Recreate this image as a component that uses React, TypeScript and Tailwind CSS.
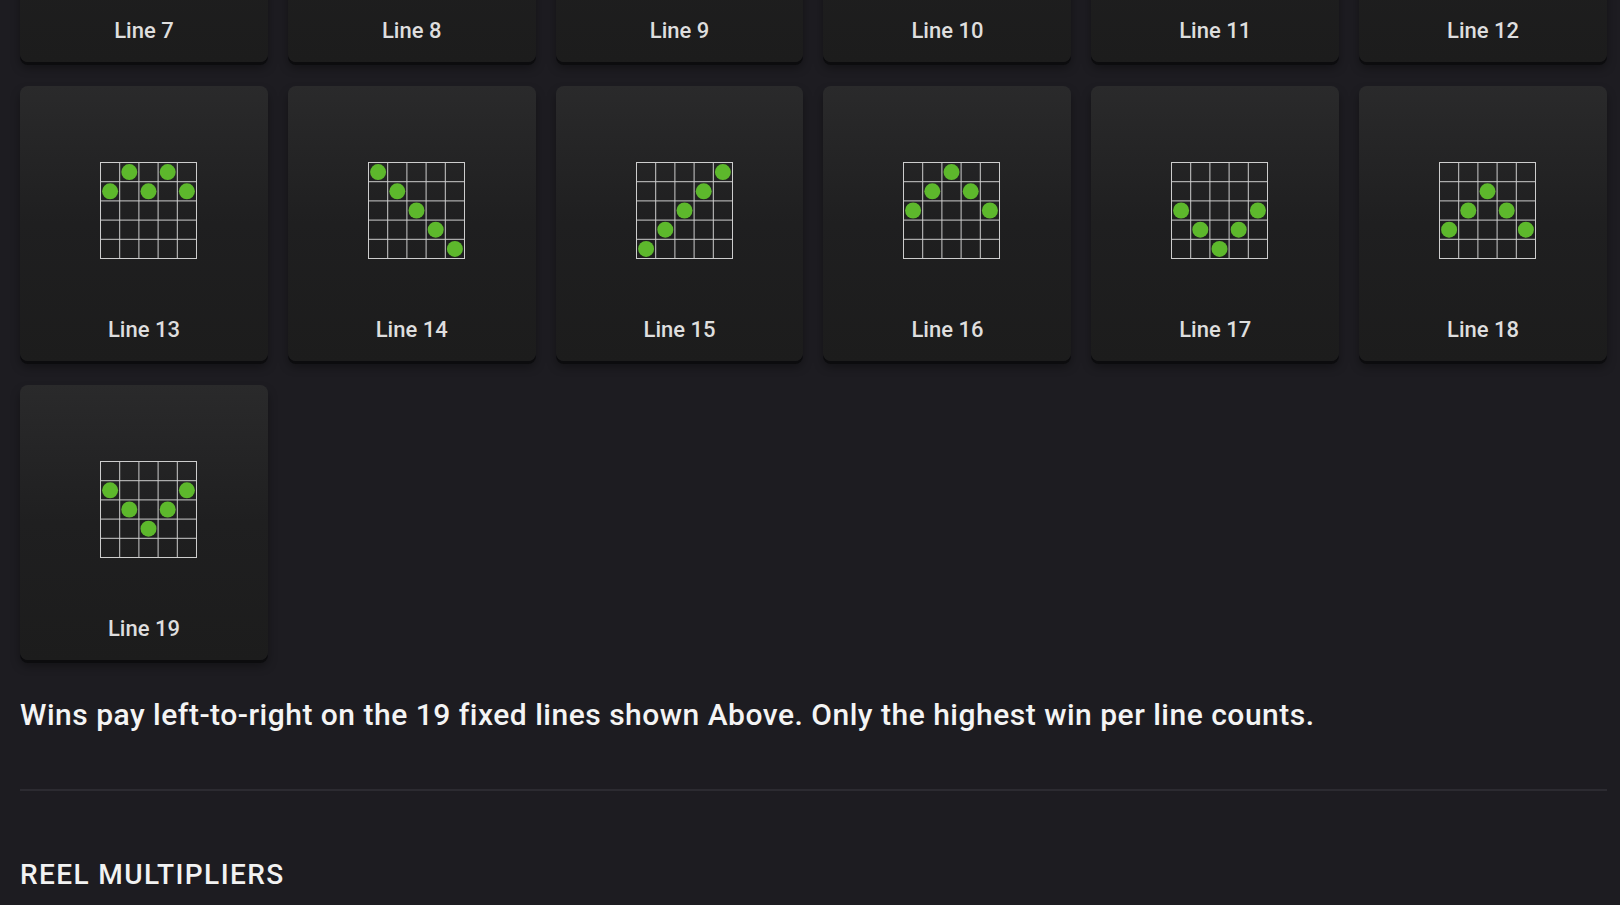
import React from "react";

// each entry: row index (0 = top) of the hit on reels 1..5
const lines: { id: number; rows: number[] }[] = [
  { id: 7, rows: [3, 4, 3, 4, 3] },
  { id: 8, rows: [1, 0, 0, 0, 1] },
  { id: 9, rows: [3, 4, 4, 4, 3] },
  { id: 10, rows: [2, 1, 2, 1, 2] },
  { id: 11, rows: [2, 3, 2, 3, 2] },
  { id: 12, rows: [0, 1, 0, 1, 0] },
  { id: 13, rows: [1, 0, 1, 0, 1] },
  { id: 14, rows: [0, 1, 2, 3, 4] },
  { id: 15, rows: [4, 3, 2, 1, 0] },
  { id: 16, rows: [2, 1, 0, 1, 2] },
  { id: 17, rows: [2, 3, 4, 3, 2] },
  { id: 18, rows: [3, 2, 1, 2, 3] },
  { id: 19, rows: [1, 2, 3, 2, 1] },
];

const CELL = 19.2;

function LineGrid({ rows }: { rows: number[] }) {
  const ticks = [0, 1, 2, 3, 4, 5];
  return (
    <svg width="97" height="97" viewBox="0 0 97 97" className="ml-[9px]">
      {ticks.map((i) => (
        <g key={i} stroke="#cdcdcd" strokeWidth="1">
          <line x1={0.5 + i * CELL} y1="0" x2={0.5 + i * CELL} y2="97" />
          <line x1="0" y1={0.5 + i * CELL} x2="97" y2={0.5 + i * CELL} />
        </g>
      ))}
      {rows.map((r, c) => (
        <circle
          key={c}
          cx={0.5 + c * CELL + CELL / 2}
          cy={0.5 + r * CELL + CELL / 2}
          r="8"
          fill="#5db82c"
        />
      ))}
    </svg>
  );
}

function LineCard({ id, rows }: { id: number; rows: number[] }) {
  return (
    <div className="flex h-[275px] flex-col items-center rounded-lg bg-gradient-to-b from-[#2a2a2b] via-[#1f1f20] to-[#1c1c1c] pt-[76px] pb-[17px] shadow-[0_3px_0_#0c0c0e,0_6px_10px_rgba(0,0,0,0.35)]">
      <LineGrid rows={rows} />
      <div className="flex-1" />
      <span className="text-[22px] leading-[28px] font-medium text-[#dedede]">
        Line {id}
      </span>
    </div>
  );
}

export default function App() {
  return (
    <div
      className="h-screen overflow-hidden bg-[#1d1c21]"
      style={{ fontFamily: "Roboto, 'Noto Sans', sans-serif" }}
    >
      <div className="-mt-[213px] pl-5 pr-[13px]">
        <div className="grid grid-cols-6 gap-x-5 gap-y-6">
          {lines.map((l) => (
            <LineCard key={l.id} id={l.id} rows={l.rows} />
          ))}
        </div>

        <p className="mt-[37px] text-[30px] leading-[35px] font-medium tracking-[0.5px] text-[#f4f4f4]">
          Wins pay left-to-right on the 19 fixed lines shown Above. Only the highest win per line counts.
        </p>

        <div className="mt-[57px] h-[2px] bg-[#2c2b31]" />

        <h2 className="mt-[67px] text-[28px] leading-[34px] font-medium tracking-[0.05em] text-[#f2f2f2]">
          REEL MULTIPLIERS
        </h2>
      </div>
    </div>
  );
}
